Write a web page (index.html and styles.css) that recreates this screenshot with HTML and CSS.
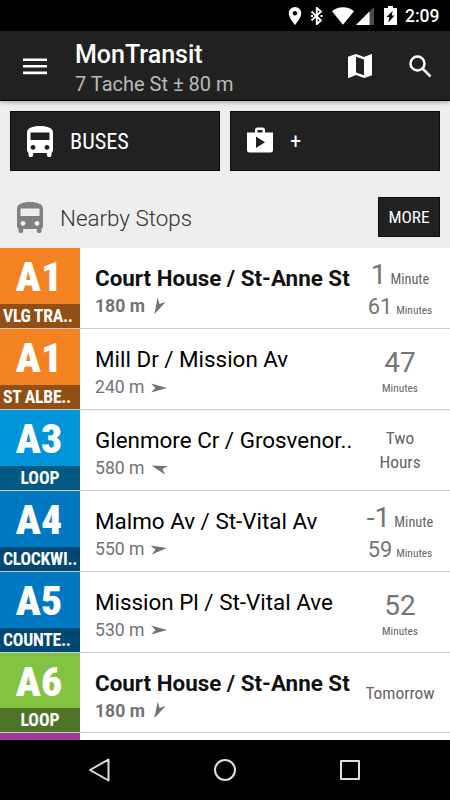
FILE: index.html
```
<!DOCTYPE html>
<html lang="en">
<head>
    <meta charset="UTF-8">
    <meta name="viewport" content="width=device-width, initial-scale=1.0">
    <title>MonTransit</title>
    <link rel="stylesheet" href="styles.css">
</head>
<body>
    <svg class="defs" width="0" height="0">
        <symbol id="bus" viewBox="0 0 26 31">
            <path fill-rule="evenodd" d="M0 7C0 2 5 0 13 0s13 2 13 7v17q0 2-1.500 3v1.800a2.200 2.200 0 0 1-4.700 0V27H6.200v1.800a2.200 2.200 0 0 1-4.700 0V27Q0 26 0 24ZM3.500 6.500V14h19V6.500ZM6 19a2.400 2.400 0 1 0 .01 0ZM20 19a2.400 2.400 0 1 0 .01 0Z"/>
        </symbol>
        <symbol id="arrow" viewBox="-8 -8 16 16">
            <path d="M8 0-8 4.500-3.500 0-8-4.500Z"/>
        </symbol>
    </svg>

    <div class="status-bar">
        <svg class="pin" width="14" height="18" viewBox="0 0 14 18"><path fill-rule="evenodd" d="M7 0a6.300 6.300 0 0 0-6.300 6.300C.7 11 7 18 7 18s6.300-7 6.300-11.700A6.300 6.300 0 0 0 7 0Zm0 4a2.300 2.300 0 1 1-.01 0Z"/></svg>
        <svg class="bluetooth" width="14" height="18" viewBox="0 0 14 18"><path class="line" d="M1.500 4.500 11 13.500 6.800 17V1L11 4.500 1.500 13.500"/><path d="M1 8h2v2H1zM10.500 8h2v2h-2z"/></svg>
        <svg class="wifi" width="22" height="18" viewBox="0 0 22 18"><path d="M0 4.300Q4.500.2 11 .2t11 4.100L11 17.800Z"/></svg>
        <svg class="signal" width="18" height="18" viewBox="0 0 18 18"><path opacity=".3" d="M18 0v18H0Z"/><path d="M13.500 4.500V18H0Z"/></svg>
        <svg class="battery" width="13" height="19" viewBox="0 0 13 19"><path fill-rule="evenodd" d="M4 0h5v2h4v17H0V2h4ZM8.800 5 2.500 11h3L4.300 16.500 10.500 9.500H7.600Z"/></svg>
        <span class="clock">2:09</span>
    </div>

    <header class="action-bar">
        <svg class="menu" width="24" height="17" viewBox="0 0 24 17"><path d="M0 .5h24v2.600H0zM0 7h24v2.600H0zM0 13.600h24v2.600H0z"/></svg>
        <div class="heading">
            <h1>MonTransit</h1>
            <p>7 Tache St ± 80 m</p>
        </div>
        <svg class="map" width="24" height="24" viewBox="0 0 24 24"><path fill-rule="evenodd" d="m23.300.1-.2.100L16 2.900 8 .1.500 2.600Q0 2.800 0 3.300v20q0 .7.700.7L8 21.100l8 2.800 7.500-2.500q.5-.2.500-.7V.7q0-.6-.7-.6ZM16 21.200 8 18.400V2.800l8 2.800Z"/></svg>
        <svg class="search" width="23" height="23" viewBox="0 0 23 23"><circle cx="8.500" cy="8.500" r="7"/><path d="M13.500 13.500 21.500 21.500"/></svg>
    </header>

    <main class="content">
        <nav class="modes">
            <a class="mode"><svg width="26" height="31"><use href="#bus"/></svg><span>BUSES</span></a>
            <a class="mode"><svg class="store" width="26" height="26" viewBox="0 0 26 26"><path fill-rule="evenodd" d="M0 5.500h8V3q0-2.500 2.500-2.500h5Q18 .5 18 3v2.500h8V23q0 2.500-2.500 2.500h-21Q0 25.500 0 23ZM10.500 5.500h5V3h-5ZM9 9.500V21l9-5.800Z"/></svg><span>+</span></a>
        </nav>

        <div class="section">
            <svg width="26" height="31"><use href="#bus"/></svg>
            <h2>Nearby Stops</h2>
            <a class="more">MORE</a>
        </div>

        <ul class="stops">
            <li class="stop bold">
                <div class="route orange"><b>A1</b><span class="left">VLG TRA..</span></div>
                <div class="info"><h3>Court House / St-Anne St</h3><p>180 m <svg class="arrow sw"><use href="#arrow"/></svg></p></div>
                <div class="times pair"><p class="next"><b>1</b> <small>Minute</small></p><p class="later"><b>61</b> <small>Minutes</small></p></div>
            </li>
            <li class="stop">
                <div class="route orange"><b>A1</b><span class="left">ST ALBE..</span></div>
                <div class="info"><h3>Mill Dr / Mission Av</h3><p>240 m <svg class="arrow"><use href="#arrow"/></svg></p></div>
                <div class="times single"><b>47</b><small>Minutes</small></div>
            </li>
            <li class="stop">
                <div class="route sky"><b>A3</b><span>LOOP</span></div>
                <div class="info"><h3>Glenmore Cr / Grosvenor..</h3><p>580 m <svg class="arrow nw"><use href="#arrow"/></svg></p></div>
                <div class="times words">Two<br>Hours</div>
            </li>
            <li class="stop">
                <div class="route blue"><b>A4</b><span class="left">CLOCKWI..</span></div>
                <div class="info"><h3>Malmo Av / St-Vital Av</h3><p>550 m <svg class="arrow ne"><use href="#arrow"/></svg></p></div>
                <div class="times pair"><p class="next"><b>-1</b> <small>Minute</small></p><p class="later"><b>59</b> <small>Minutes</small></p></div>
            </li>
            <li class="stop">
                <div class="route blue"><b>A5</b><span class="left">COUNTE..</span></div>
                <div class="info"><h3>Mission Pl / St-Vital Ave</h3><p>530 m <svg class="arrow"><use href="#arrow"/></svg></p></div>
                <div class="times single"><b>52</b><small>Minutes</small></div>
            </li>
            <li class="stop bold">
                <div class="route green"><b>A6</b><span>LOOP</span></div>
                <div class="info"><h3>Court House / St-Anne St</h3><p>180 m <svg class="arrow sw"><use href="#arrow"/></svg></p></div>
                <div class="times words">Tomorrow</div>
            </li>
            <li class="stop">
                <div class="route purple"></div>
            </li>
        </ul>
    </main>

    <footer class="nav-bar">
        <svg width="24" height="24" viewBox="0 0 24 24"><path d="M20.500 1.500v21L2 12Z"/></svg>
        <svg width="24" height="24" viewBox="0 0 24 24"><circle cx="12" cy="12" r="10"/></svg>
        <svg width="24" height="24" viewBox="0 0 24 24"><path d="M3 3h18v18H3Z"/></svg>
    </footer>
</body>
</html>
```
FILE: styles.css
```
* {
    box-sizing: border-box;
    margin: 0;
    padding: 0;
}

body {
    display: flex;
    flex-direction: column;
    width: 450px;
    height: 800px;
    overflow: hidden;
    font-family: Roboto, sans-serif;
    background-color: #eee;
}

svg {
    display: block;
    flex: none;
    fill: currentColor;
}

.defs {
    position: absolute;
}

.status-bar {
    display: flex;
    align-items: center;
    height: 31px;
    flex: none;
    padding-left: 288px;
    background-color: #000;
    color: #fff;
}

.bluetooth {
    margin-left: 8px;
}

.bluetooth .line {
    fill: none;
    stroke: currentColor;
    stroke-width: 1.9;
}

.wifi {
    margin-left: 8px;
}

.signal {
    margin-left: 2px;
}

.battery {
    margin-left: 10px;
}

.clock {
    margin-left: 8px;
    padding-top: 2px;
    font-size: 17.5px;
    font-weight: 500;
    line-height: 29px;
}

.action-bar {
    display: flex;
    align-items: center;
    height: 70px;
    flex: none;
    padding-left: 23px;
    background-color: #212121;
    border-bottom: 1px solid #000;
    color: #fff;
    box-shadow: 0 1px 5px rgba(0, 0, 0, 0.35);
    z-index: 1;
}

.menu {
    margin-top: 1px;
}

.heading {
    width: 272px;
    margin-left: 28px;
    padding-top: 8px;
    white-space: nowrap;
}

.heading h1 {
    font-size: 25px;
    font-weight: 500;
    line-height: 30px;
}

.heading p {
    font-size: 20px;
    line-height: 29px;
    color: #bababa;
}

.map {
    margin-left: 1px;
    margin-top: 1px;
}

.search {
    margin-left: 37px;
    margin-top: 1px;
    fill: none;
    stroke: currentColor;
    stroke-width: 2.5;
}

.content {
    flex: 1;
    min-height: 0;
    overflow: hidden;
}

.mode, .more, .route, .times small, .words {
    font-family: "Roboto Condensed", Roboto, sans-serif;
    font-stretch: 75%;
}

.modes {
    display: flex;
    gap: 10px;
    padding: 10px 10px 0;
}

.mode {
    display: flex;
    align-items: center;
    width: 210px;
    height: 60px;
    padding-left: 16px;
    background-color: #212121;
    border: 1px solid #0c0c0c;
    color: #fff;
    font-size: 22.3px;
}

.mode span {
    margin-left: 17px;
}

.mode .store {
    margin-top: -3px;
}

.section {
    display: flex;
    align-items: center;
    height: 77.3px;
    padding: 15px 10px 0 17px;
    color: #808080;
}

.section h2 {
    flex: 1;
    margin-left: 17px;
    padding-top: 2px;
    font-size: 22.4px;
    font-weight: 300;
    color: #333;
}

.more {
    width: 62px;
    height: 40px;
    background-color: #212121;
    border: 1px solid #0c0c0c;
    color: #fff;
    font-size: 17.3px;
    line-height: 39px;
    text-align: center;
}

.stops {
    list-style: none;
}

.stop {
    display: flex;
    height: 80.85px;
    background-color: #fff;
    border-bottom: 1px solid #ccc;
}

.route {
    width: 80px;
    display: flex;
    flex-direction: column;
    justify-content: space-between;
    color: #fff;
    font-weight: 700;
    text-align: center;
    white-space: nowrap;
}

.route b {
    padding-top: 1px;
    padding-right: 2px;
    height: 55px;
    font-size: 41.5px;
    line-height: 56px;
}

.route span {
    height: 24px;
    background-color: rgba(0, 0, 0, 0.4);
    font-size: 17.6px;
    line-height: 25.5px;
}

.route .left {
    padding-left: 3px;
    text-align: left;
    letter-spacing: -0.25px;
}

.orange {
    background-color: #f58220;
}

.sky {
    background-color: #0095da;
}

.blue {
    background-color: #0079c2;
}

.green {
    background-color: #82c341;
}

.purple {
    background-color: #9b3a96;
}

.info {
    width: 270px;
    padding: 16px 0 0 15px;
    white-space: nowrap;
}

.info h3 {
    font-size: 22.4px;
    font-weight: 400;
    line-height: 29px;
    color: #000;
}

.info p {
    display: flex;
    align-items: center;
    gap: 7px;
    padding-top: 2px;
    font-size: 17.6px;
    line-height: 23px;
    color: #737373;
}

.bold .info h3, .bold .info p {
    font-weight: 700;
}

.bold .info h3 {
    color: #111;
}

.arrow {
    width: 16px;
    height: 16px;
}

.bold .arrow {
    margin-left: -2px;
}

.sw {
    transform: rotate(117deg);
}

.nw {
    transform: rotate(198deg);
}

.ne {
    transform: rotate(-7deg);
}

.times {
    width: 100px;
    color: #666;
    text-align: center;
    white-space: nowrap;
}

.times b {
    font-weight: 400;
    color: #757575;
}

.pair {
    padding-top: 10px;
}

.next b {
    font-size: 28px;
    line-height: 34px;
}

.next small {
    font-size: 14.3px;
}

.later b {
    font-size: 21.8px;
    line-height: 30px;
}

.later small, .single small {
    font-size: 11.4px;
}

.single {
    display: flex;
    flex-direction: column;
    padding-top: 17px;
}

.single b {
    font-size: 28px;
    line-height: 34px;
}

.single small {
    line-height: 17px;
}

.words {
    align-self: center;
    padding-top: 1px;
    font-size: 17.4px;
    line-height: 24px;
}

.nav-bar {
    display: flex;
    align-items: center;
    justify-content: center;
    gap: 101px;
    height: 60px;
    flex: none;
    background-color: #000;
    color: #e0e0e0;
}

.nav-bar svg {
    fill: none;
    stroke: currentColor;
    stroke-width: 2;
    stroke-linejoin: round;
}
```
